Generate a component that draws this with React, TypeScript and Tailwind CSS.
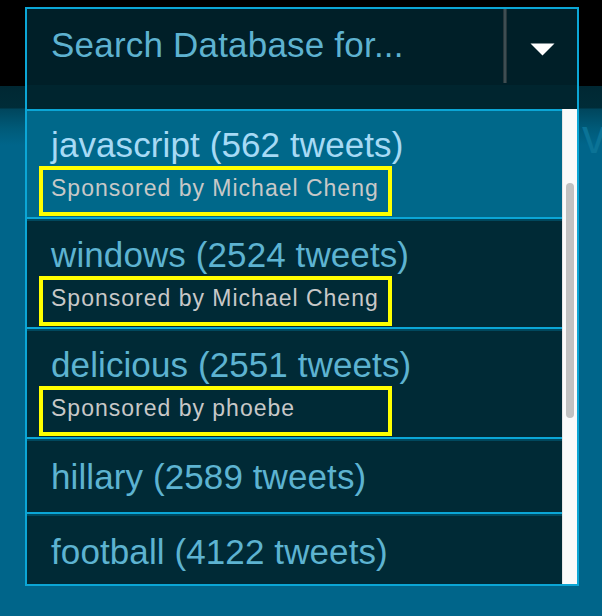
import React from "react";

type Item = { title: string; sponsor?: string; active?: boolean };

const items: Item[] = [
  { title: "javascript (562 tweets)", sponsor: "Sponsored by Michael Cheng", active: true },
  { title: "windows (2524 tweets)", sponsor: "Sponsored by Michael Cheng" },
  { title: "delicious (2551 tweets)", sponsor: "Sponsored by phoebe" },
  { title: "hillary (2589 tweets)" },
  { title: "football (4122 tweets)" },
];

function Row({ item, first }: { item: Item; first: boolean }) {
  const bg = item.active ? "bg-[#00688a]" : "bg-[#002a36]";
  const titleColor = item.active ? "text-[#a6daf5]" : "text-[#5db3d1]";
  return (
    <div className={`shrink-0 border-b-2 border-[#0ba6d6] ${bg}`}>
      {!first && <div className="h-[2px] bg-[#00485e]" />}
      {item.sponsor ? (
        <div className="pt-[14px] pb-[1px]">
          <div className={`h-[40px] pl-[24px] text-[35px] leading-[40px] tracking-[0.1px] whitespace-nowrap ${titleColor}`}>
            {item.title}
          </div>
          <div className="mt-[1px] ml-[12px] h-[50px] w-[353px] border-4 border-[#ffff00] pl-[8px] text-[23px] leading-[37px] tracking-[1px] text-[#c8c8c8] whitespace-nowrap">
            {item.sponsor}
          </div>
        </div>
      ) : (
        <div className="h-[71px] pt-[16px]">
          <div className={`h-[40px] pl-[24px] text-[35px] leading-[40px] tracking-[0.1px] whitespace-nowrap ${titleColor}`}>
            {item.title}
          </div>
        </div>
      )}
    </div>
  );
}

export default function App() {
  return (
    <div
      className="relative h-[616px] w-[602px] overflow-hidden bg-[linear-gradient(to_bottom,#000000_0px,#000000_86px,#002833_86px,#002c38_108px,#00465d_109px,#005a78_128px,#00658a_145px,#00658a_100%)] pt-[7px] pl-[25px]"
      style={{ fontFamily: '"Liberation Sans", Arial, Helvetica, sans-serif' }}
    >
      <div className="absolute left-[582px] top-[112px] text-[48px] leading-[50px] text-[#0b7396] whitespace-nowrap">
        ve
      </div>
      <div className="relative w-[554px] border-2 border-[#0ba6d6]">
        {/* header */}
        <div className="flex h-[100px] bg-[linear-gradient(to_bottom,#001f28_76px,#00252f_76px)]">
          <div className="flex-1 pl-[24px] pt-[16px] text-[35px] leading-[40px] tracking-[0.2px] text-[#5eb2d0] whitespace-nowrap">
            Search Database for...
          </div>
          <div className="h-[74px] w-[4px] border-x border-[#26363b] bg-[#3e4e53]" />
          <div className="flex h-[74px] w-[70px] justify-center pt-[34px]">
            <svg width="25" height="13" viewBox="0 0 25 13">
              <path d="M0.5 0.5 L24.5 0.5 L12.5 12.5 Z" fill="#ffffff" />
            </svg>
          </div>
        </div>
        {/* list */}
        <div className="flex h-[475px]">
          <div className="flex flex-1 flex-col overflow-hidden border-t-2 border-[#0ba6d6]">
            {items.map((it, i) => (
              <Row key={i} item={it} first={i === 0} />
            ))}
          </div>
          <div className="w-[15px] border-l border-[#e6e6e6] bg-[#fafafa] pt-[74px]">
            <div className="mx-auto h-[235px] w-[8px] rounded-full bg-[#c1c1c1]" />
          </div>
        </div>
      </div>
    </div>
  );
}
